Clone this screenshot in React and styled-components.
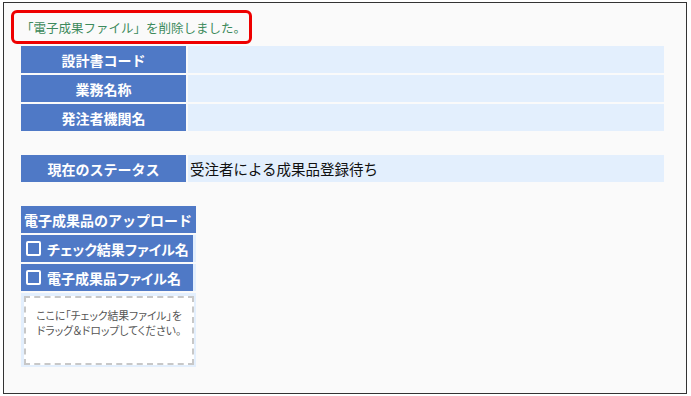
import React from 'react';
import styled, { createGlobalStyle } from 'styled-components';

const GlobalStyle = createGlobalStyle`
  html, body {
    margin: 0;
    padding: 0;
    background: #ffffff;
  }
  body {
    font-family: "Noto Sans CJK JP", "Noto Sans", sans-serif;
  }
`;

const Frame = styled.div`
  box-sizing: border-box;
  margin: 2px 0 0 3px;
  width: 684px;
  height: 392px;
  border: 1px solid #333;
  background: #fafafa;
  padding: 7px 0 0 7px;
`;

const Notice = styled.div`
  box-sizing: border-box;
  width: 241px;
  height: 34px;
  border: 3px solid #ee0000;
  border-radius: 6px;
  display: flex;
  align-items: center;
  padding-left: 7px;
  color: #3d8a5c;
  font-size: 12.5px;
  white-space: nowrap;
`;

const Section = styled.div`
  margin-left: 10px;
  margin-top: ${(p) => p.$top || 0}px;
  display: flex;
  flex-direction: column;
  gap: 2px;
  width: ${(p) => p.$width || 643}px;
`;

const Row = styled.div`
  display: grid;
  grid-template-columns: 165px 1fr;
  column-gap: 2px;
  height: 27px;
`;

const Label = styled.div`
  background: #4f79c6;
  color: #fff;
  font-weight: bold;
  font-size: 14px;
  display: flex;
  align-items: center;
  justify-content: center;
`;

const Value = styled.div`
  background: #e3effd;
  color: #111;
  font-size: 14.5px;
  display: flex;
  align-items: center;
  padding-left: 2px;
`;

const UploadHead = styled.div`
  height: 27px;
  background: #4f79c6;
  color: #fff;
  font-weight: bold;
  font-size: 14px;
  display: flex;
  align-items: center;
  padding-left: 3px;
  white-space: nowrap;
  overflow: hidden;
`;

const CheckCell = styled.div`
  height: 27px;
  background: #e3effd;
  padding-right: 3px;
  display: flex;
`;

const CheckLabel = styled.div`
  flex: 1;
  background: #4f79c6;
  color: #fff;
  font-weight: bold;
  font-size: 14px;
  display: flex;
  align-items: center;
  gap: 6px;
  padding-left: 5px;
  font-feature-settings: "palt";
  white-space: nowrap;
  overflow: hidden;
`;

const Box = styled.span`
  box-sizing: border-box;
  width: 15px;
  height: 15px;
  border: 2px solid #fff;
  border-radius: 2px;
  flex: none;
`;

const DropCell = styled.div`
  height: 74px;
  background: #e3effd;
  padding: 3px 2px 2px 3px;
  box-sizing: border-box;
`;

const DropZone = styled.div`
  box-sizing: border-box;
  height: 100%;
  background: #fff;
  border: 2px dashed #c8c8c8;
  color: #555;
  font-size: 10.8px;
  line-height: 15px;
  text-align: center;
  padding-top: 10px;
  font-feature-settings: "palt";
  white-space: nowrap;
`;

const rows = ['設計書コード', '業務名称', '発注者機関名'];

export default function App() {
  return (
    <>
      <GlobalStyle />
      <Frame>
        <Notice>「電子成果ファイル」を削除しました。</Notice>
        <Section $top={2}>
          {rows.map((r) => (
            <Row key={r}>
              <Label>{r}</Label>
              <Value />
            </Row>
          ))}
        </Section>
        <Section $top={24}>
          <Row>
            <Label>現在のステータス</Label>
            <Value>受注者による成果品登録待ち</Value>
          </Row>
        </Section>
        <Section $top={24} $width={175}>
          <UploadHead>電子成果品のアップロード</UploadHead>
          <CheckCell>
            <CheckLabel>
              <Box />
              チェック結果ファイル名
            </CheckLabel>
          </CheckCell>
          <CheckCell>
            <CheckLabel>
              <Box />
              電子成果品ファイル名
            </CheckLabel>
          </CheckCell>
          <DropCell>
            <DropZone>
              ここに「チェック結果ファイル」を
              <br />
              ドラッグ＆ドロップしてください。
            </DropZone>
          </DropCell>
        </Section>
      </Frame>
    </>
  );
}
